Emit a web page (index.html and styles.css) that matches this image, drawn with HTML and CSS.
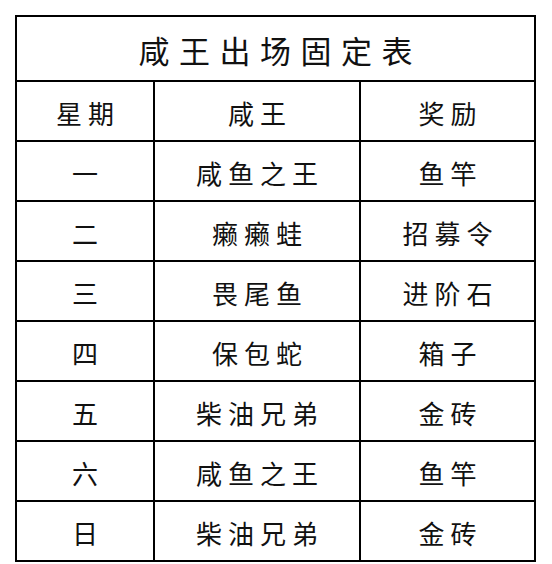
FILE: index.html
```html
<!DOCTYPE html>
<html lang="zh-CN">
<head>
<meta charset="utf-8">
<title>咸王出场固定表</title>
<link rel="stylesheet" href="styles.css">
</head>
<body>
<div class="sheet">
  <div class="cell title">咸王出场固定表</div>
  <div class="cell head">星期</div>
  <div class="cell head">咸王</div>
  <div class="cell head">奖励</div>

  <div class="cell">一</div>
  <div class="cell">咸鱼之王</div>
  <div class="cell">鱼竿</div>

  <div class="cell">二</div>
  <div class="cell">癞癞蛙</div>
  <div class="cell">招募令</div>

  <div class="cell">三</div>
  <div class="cell">畏尾鱼</div>
  <div class="cell">进阶石</div>

  <div class="cell">四</div>
  <div class="cell">保包蛇</div>
  <div class="cell">箱子</div>

  <div class="cell">五</div>
  <div class="cell">柴油兄弟</div>
  <div class="cell">金砖</div>

  <div class="cell">六</div>
  <div class="cell">咸鱼之王</div>
  <div class="cell">鱼竿</div>

  <div class="cell">日</div>
  <div class="cell">柴油兄弟</div>
  <div class="cell">金砖</div>
</div>
</body>
</html>
```

FILE: styles.css
```css
html, body {
  margin: 0;
  padding: 0;
  background: #fff;
}

body {
  padding: 15px 0 0 15px;
  font-family: "Noto Sans CJK SC", "Noto Sans CJK JP", sans-serif;
  color: #111;
}

.sheet {
  display: grid;
  width: 521px;
  box-sizing: border-box;
  grid-template-columns: 136px 204px 173px;
  grid-template-rows: 63px repeat(8, 58px);
  gap: 2px;
  padding: 2px;
  background: #000;
}

.cell {
  background: #fff;
  display: flex;
  align-items: center;
  justify-content: center;
  font-size: 26px;
  font-weight: 400;
  letter-spacing: 6px;
  padding-left: 6px;
  padding-top: 3px;
  box-sizing: border-box;
  line-height: 1;
}

.title {
  grid-column: 1 / -1;
  font-size: 31px;
  letter-spacing: 9.5px;
  padding-left: 9.5px;
  padding-top: 2px;
}
```
